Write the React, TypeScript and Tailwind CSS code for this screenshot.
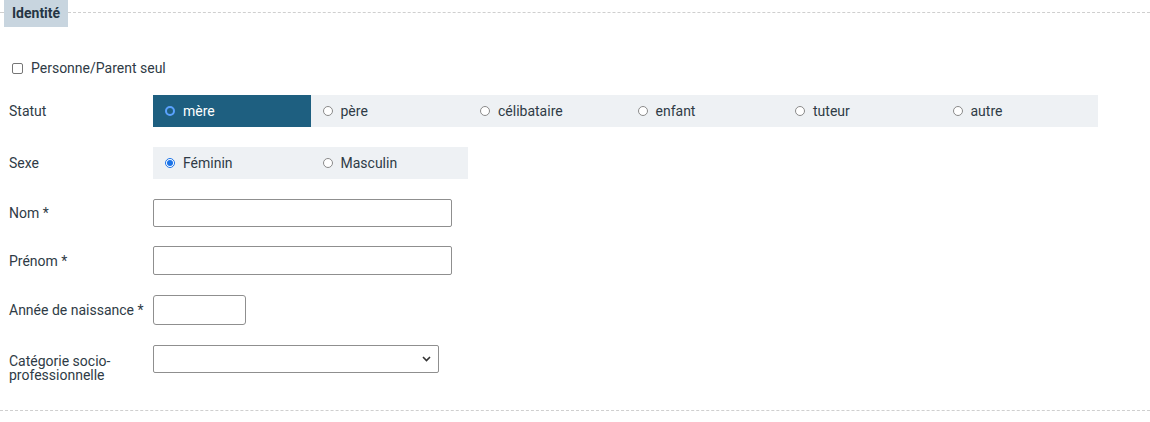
import React from "react";

const statuts = ["mère", "père", "célibataire", "enfant", "tuteur", "autre"];
const sexes = ["Féminin", "Masculin"];

function Radio({ checked, dark }: { checked: boolean; dark?: boolean }) {
  if (checked && dark) {
    return <span className="inline-block h-[10px] w-[10px] shrink-0 rounded-full border-2 border-[#5aa2ff] bg-[#1e5f80]" />;
  }
  if (checked) {
    return (
      <span className="flex h-[10px] w-[10px] shrink-0 items-center justify-center rounded-full border border-[#1a73e8] bg-white">
        <span className="h-[6px] w-[6px] rounded-full bg-[#1a73e8]" />
      </span>
    );
  }
  return <span className="inline-block h-[10px] w-[10px] shrink-0 rounded-full border border-[#8a8a8a] bg-white" />;
}

function Segmented({ options, selected, dark }: { options: string[]; selected: number; dark?: boolean }) {
  return (
    <div className="flex h-[32px] bg-[#eef1f4]">
      {options.map((o, i) => {
        const active = i === selected;
        return (
          <label
            key={o}
            className={
              "flex w-[157.5px] items-center gap-[8px] pl-[12px] text-[14px] " +
              (active && dark ? "bg-[#1e5f80] text-white" : "text-[#2f3b46]")
            }
          >
            <Radio checked={active} dark={dark} />
            <span>{o}</span>
          </label>
        );
      })}
    </div>
  );
}

function Row({ label, children, className = "" }: { label: React.ReactNode; children: React.ReactNode; className?: string }) {
  return (
    <div className={"flex items-center " + className}>
      <div className="w-[153px] shrink-0 pl-[9px] text-[14px] leading-[16px] text-[#2f3b46]">{label}</div>
      {children}
    </div>
  );
}

export default function App() {
  return (
    <div className="h-[422px] w-[1150px] bg-white" style={{ fontFamily: "Roboto, 'Liberation Sans', sans-serif" }}>
      {/* Legend */}
      <div className="flex h-[27px] items-start">
        <div className="mt-[12px] w-[4px] border-t border-dashed border-[#cfcfcf]" />
        <div className="flex h-[27px] items-center bg-[#c8d5df] px-[8px] text-[14px] font-bold text-[#253544]">Identité</div>
        <div className="mt-[12px] flex-1 border-t border-dashed border-[#cfcfcf]" />
      </div>

      <div className="mt-[31px] flex h-[20px] items-center gap-[8px] pl-[12px] text-[14px] text-[#2f3b46]">
        <span className="inline-block h-[11px] w-[11px] rounded-[2px] border border-[#767676] bg-white" />
        <span>Personne/Parent seul</span>
      </div>

      <Row label="Statut" className="mt-[17px]">
        <Segmented options={statuts} selected={0} dark />
      </Row>

      <Row label="Sexe" className="mt-[20px]">
        <Segmented options={sexes} selected={0} />
      </Row>

      <Row label="Nom *" className="mt-[20px]">
        <input className="h-[28px] w-[299px] rounded-[2px] border border-[#8f8f8f] bg-white" />
      </Row>

      <Row label="Prénom *" className="mt-[19px]">
        <input className="h-[29px] w-[299px] rounded-[2px] border border-[#8f8f8f] bg-white" />
      </Row>

      <Row label="Année de naissance *" className="mt-[20px]">
        <input className="h-[30px] w-[93px] rounded-[3px] border border-[#8f8f8f] bg-white" />
      </Row>

      <div className="mt-[20px] flex h-[37px] items-start">
        <div className="w-[153px] shrink-0 pl-[9px] pt-[9px] text-[14px] leading-[14px] text-[#2f3b46]">
          Catégorie socio-
          <br />
          professionnelle
        </div>
        <div className="flex h-[28px] w-[286px] items-center justify-end rounded-[2px] border border-[#8f8f8f] bg-white pr-[7px]">
          <svg width="9" height="6" viewBox="0 0 9 6" fill="none">
            <path d="M1 1l3.5 3.5L8 1" stroke="#333" strokeWidth="1.6" />
          </svg>
        </div>
      </div>

      <div className="mt-[28px] border-t border-dashed border-[#cfcfcf]" />
    </div>
  );
}
